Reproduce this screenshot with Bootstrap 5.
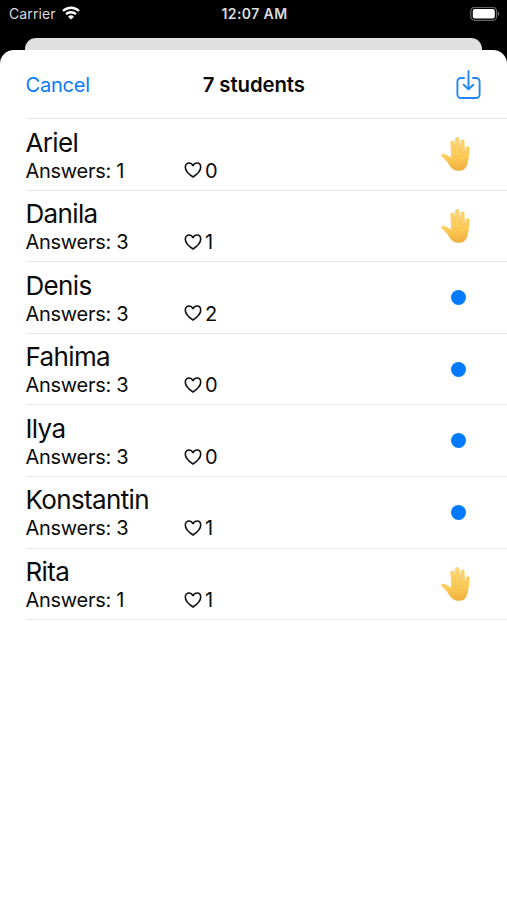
<!DOCTYPE html>
<html lang="en">
<head>
<meta charset="utf-8">
<meta name="viewport" content="width=device-width, initial-scale=1">
<title>7 students</title>
<link href="https://cdn.jsdelivr.net/npm/bootstrap@5.3.0/dist/css/bootstrap.min.css" rel="stylesheet">
<style>
  body { font-family: Inter, "Liberation Sans", sans-serif; color: #0a0a0a; background: #000; line-height: 1; }
  .phone { height: 900px; overflow: hidden; }
  .status { height: 38px; padding: 0 7px 10px 9px; font-size: 14px; letter-spacing: .1px; color: #dcdcdc; }
  .wifi { margin-left: 6px; margin-top: -2px; }
  .status-time { font-weight: 600; font-size: 14px; letter-spacing: .4px; }
  .behind { height: 12px; margin: 0 25px; background: #e0e0e0; border-radius: 11px 11px 0 0; }
  .sheet { border-radius: 14px 14px 0 0; }
  .sheet-head { height: 68px; padding: 1px 26px 0 25.5px; }
  .tint { color: #0a7aff; font-size: 20px; letter-spacing: -.2px; }
  .title { font-size: 20.4px; font-weight: 600; letter-spacing: -.1px; padding: 1px 0 0 1px; }
  .side { flex: 1 0 0; }
  .students { margin-left: 25.5px; border-top: 1px solid #e6e6e8; }
  .student { height: 71.6px; border-bottom: 1px solid #e6e6e8; padding-right: 36.5px; }
  .name { font-size: 26px; line-height: 32px; letter-spacing: -.65px; padding-top: 7.5px; }
  .stats { font-size: 20px; line-height: 24.6px; letter-spacing: -.28px; }
  .stats svg { margin-bottom: 1px; }
  .answers { width: 158px; }
  .likes { margin-left: 3.5px; }
  .mark-slot { width: 30px; }
  .dot { width: 15px; height: 15px; background: #007aff; margin-right: 5px; }
</style>
</head>
<body>
<svg class="position-absolute" width="0" height="0">
  <defs>
    <linearGradient id="skin" gradientUnits="userSpaceOnUse" x1="15" y1="0" x2="18" y2="35">
      <stop offset="0" stop-color="#fbd575"/><stop offset=".6" stop-color="#fbcb58"/><stop offset="1" stop-color="#efac3a"/>
    </linearGradient>
  </defs>
</svg>
<div class="phone d-flex flex-column">
  <div class="status d-flex align-items-center">
    <div class="side d-flex align-items-center">
      <span>Carrier</span>
      <svg class="wifi" width="18" height="14" viewBox="0 0 18 14" fill="none" stroke="#fff" stroke-width="2.4"><path d="M1 5a11.5 11.5 0 0 1 16 0M4 8.2a7.2 7.2 0 0 1 10 0"/><path d="M9 13.6 6 10.7a4.4 4.4 0 0 1 6 0z" fill="#fff" stroke="none"/></svg>
    </div>
    <span class="status-time">12:07 AM</span>
    <div class="side d-flex justify-content-end">
      <svg width="30" height="15" viewBox="0 0 30 15"><rect x=".8" y=".3" width="25.8" height="13" rx="3.8" fill="none" stroke="#666" stroke-width="1.2"/><rect x="2.8" y="2.1" width="22" height="9.4" rx="2" fill="#fff"/><path d="M27.8 4.500c2 .8 2 3.800 0 4.600z" fill="#666"/></svg>
    </div>
  </div>
  <div class="behind"></div>
  <main class="sheet bg-white flex-grow-1">
    <header class="sheet-head d-flex align-items-center">
      <div class="side"><a href="#" class="tint text-decoration-none">Cancel</a></div>
      <h1 class="title m-0">7 students</h1>
      <div class="side d-flex justify-content-end">
        <svg width="25" height="30" viewBox="0 0 25 30" fill="none" stroke="#2286f5" stroke-width="1.9" stroke-linecap="round" stroke-linejoin="round"><path d="M8 8H5A3.6 3.6 0 0 0 1.4 11.500v13A3.6 3.6 0 0 0 5 28h15a3.6 3.6 0 0 0 3.6-3.500V11.500A3.6 3.6 0 0 0 20 8h-3M12.5 1v18M7.7 14.700l4.8 4.6 4.8-4.6"/></svg>
      </div>
    </header>
    <div class="students" id="students"></div>
  </main>
</div>
<script src="https://cdn.jsdelivr.net/npm/bootstrap@5.3.0/dist/js/bootstrap.bundle.min.js"></script>
<script>
  const students = [
    ["Ariel", 1, 0, true], ["Danila", 3, 1, true], ["Denis", 3, 2, false], ["Fahima", 3, 0, false],
    ["Ilya", 3, 0, false], ["Konstantin", 3, 1, false], ["Rita", 1, 1, true]
  ];
  const heart = '<svg width="18" height="16" viewBox="0 0 18 16" fill="none" stroke="#111" stroke-width="1.6" stroke-linejoin="round"><path d="M9 15C4.200 11.800 1.300 8.600 1.300 5.200 1.300 2.700 2.900 1 4.900 1 6.700 1 8.100 2 9 3.700 9.900 2 11.300 1 13.100 1 15.100 1 16.700 2.700 16.700 5.200 16.700 8.600 13.800 11.800 9 15z"/></svg>';
  const hand = '<svg width="30" height="36" viewBox="0 0 30 36"><g stroke="url(#skin)" stroke-linecap="round" fill="none"><path d="M12.500 20 11.500 6.700" stroke-width="4.400"/><path d="M17 18 16.200 3.200" stroke-width="4.400"/><path d="M21.300 18 21.500 5.700" stroke-width="4.200"/><path d="M25.800 21 26.900 12" stroke-width="3.700"/></g><path d="M10.200 15.500 19 13l8.700 3.500C28 27 25.500 34.800 18 34.800 12.500 34.800 9.500 31.500 7.500 28 5.500 24.500 3 22.500 1.200 20.800-.500 19 1.200 17.200 3.500 18 6.500 19 8.800 21.200 10.200 21.200z" fill="url(#skin)"/><path d="M14.200 8v8M19 8v8.500M23.800 10v7M13 19.500l3 1M18 20l3-.800M14.500 22l2-1" fill="none" stroke="#dfa02f" stroke-width=".7" opacity=".6"/></svg>';
  document.getElementById("students").innerHTML = students.map(([name, answers, likes, raised]) => `
    <div class="student d-flex justify-content-between align-items-center">
      <div class="align-self-start">
        <div class="name">${name}</div>
        <div class="stats d-flex align-items-center"><span class="answers">Answers: ${answers}</span>${heart}<span class="likes">${likes}</span></div>
      </div>
      ${raised ? `<div class="mark-slot d-flex">${hand}</div>` : '<span class="dot rounded-circle"></span>'}
    </div>`).join("");
</script>
</body>
</html>
